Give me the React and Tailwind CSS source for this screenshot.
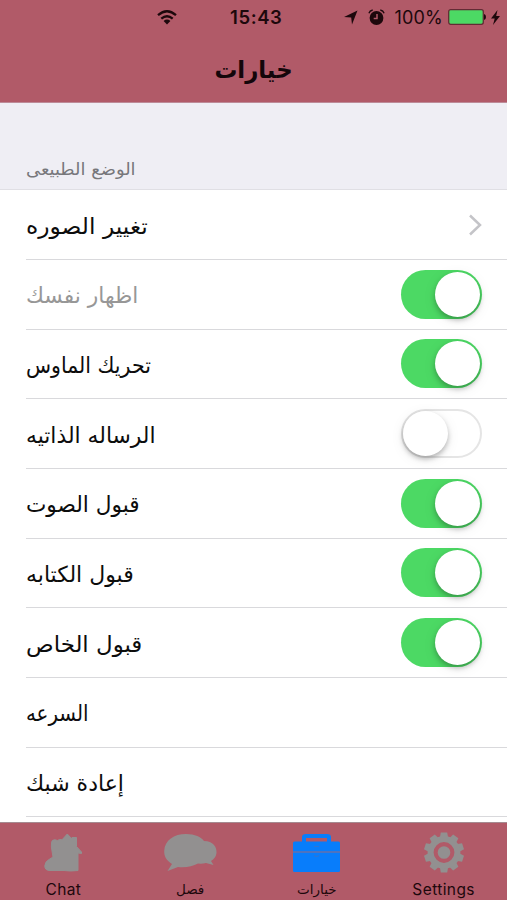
const rows = [
  { label: "تغيير الصوره", kind: "link", fit: "scale-x-[1.062]" },
  { label: "اظهار نفسك", kind: "on", muted: true, fit: "scale-x-[0.99]" },
  { label: "تحريك الماوس", kind: "on", fit: "scale-x-[0.933]" },
  { label: "الرساله الذاتيه", kind: "off", fit: "scale-x-[0.992]" },
  { label: "قبول الصوت", kind: "on", fit: "scale-x-[0.983]" },
  { label: "قبول الكتابه", kind: "on", fit: "scale-x-100" },
  { label: "قبول الخاص", kind: "on", fit: "scale-x-[1.04]" },
  { label: "السرعه", fit: "scale-x-[0.9]" },
  { label: "إعادة شبك", fit: "scale-x-100" },
];

function Toggle({ on }) {
  return (
    <div
      className={`flex h-[49px] w-[81px] items-center rounded-full ${
        on ? "justify-end bg-[#4cd964] px-[2px]" : "justify-start border-2 border-[#e5e5e5] bg-white"
      }`}
    >
      <div className="size-[45px] rounded-full bg-white shadow-[0_3px_5px_rgba(0,0,0,0.25),0_3px_14px_rgba(0,0,0,0.08)]" />
    </div>
  );
}

function Row({ label, kind, muted, fit }) {
  return (
    <div className="ml-[26px] flex h-[69.65px] shrink-0 items-center justify-between border-b border-[#d9d9dc] pr-[25px]">
      <span
        dir="rtl"
        className={`mt-[4px] origin-left whitespace-nowrap text-[22px] leading-[30px] ${fit} ${muted ? "text-[#979797]" : "text-[#0c0c0c]"}`}
      >
        {label}
      </span>
      {kind === "link" && (
        <svg width="14" height="22" viewBox="0 0 14 22" fill="none" stroke="#c4c4c8" strokeWidth="2.5">
          <path d="M2 1.5 12 11 2 20.5" />
        </svg>
      )}
      {kind === "on" && <Toggle on />}
      {kind === "off" && <Toggle />}
    </div>
  );
}

function StatusBar() {
  return (
    <div className="grid h-[34px] grid-cols-[230px_auto_1fr] items-center text-[#1d080c]">
      <svg className="ml-[157px]" width="20" height="15" viewBox="0 0 20 15" fill="none" stroke="currentColor" strokeWidth="2.3">
        <path d="M1 5.2Q10-2.6 19 5.2M4.3 8.7Q10 3.8 15.7 8.7" />
        <path d="M6.6 10.9Q10 8.2 13.4 10.9L10 14.6Z" fill="currentColor" stroke="none" />
      </svg>
      <span className="pt-px font-[Inter,sans-serif] text-[18.5px] font-semibold tracking-[0.6px]">15:43</span>
      <div className="flex items-center justify-end pr-[7px]">
        <svg width="14" height="15" viewBox="0 0 14 15" fill="currentColor">
          <path d="M13.5 .5 8 14.5 7.2 7.5 0 7Z" />
        </svg>
        <svg className="ml-[10px]" width="17" height="17" viewBox="0 0 17 17">
          <circle cx="8.5" cy="9" r="6.9" fill="currentColor" />
          <path d="M.9 4.3Q1.7 1.6 4.7 1M16.1 4.3Q15.3 1.6 12.3 1" fill="none" stroke="currentColor" strokeWidth="1.3" />
          <path d="M9 5v4.5H5.7" fill="none" stroke="#b15a68" strokeWidth="1.5" />
        </svg>
        <span className="ml-[9px] font-[Inter,sans-serif] text-[18px] tracking-[0.2px]">100%</span>
        <svg className="ml-[5px]" width="38" height="16" viewBox="0 0 38 16">
          <rect x=".7" y=".7" width="34.6" height="14.6" rx="2" fill="#4cd964" stroke="#632b35" strokeWidth="1.3" />
          <path d="M36 5q2 .5 2 3t-2 3Z" fill="currentColor" />
        </svg>
        <svg className="ml-[5px]" width="9" height="15" viewBox="0 0 9 15" fill="currentColor">
          <path d="M6.5 0 0 8.5H3.7L2 15 9 6H5.2Z" />
        </svg>
      </div>
    </div>
  );
}

function HouseIcon() {
  return (
    <svg width="38" height="39" viewBox="0 0 38 39" fill="#929090" stroke="#929090" strokeWidth="1" strokeLinejoin="round">
      <path d="M7.500 10Q7.500 6.500 11 6.800L13.500 7.500 15.500 6.500 18 6.800 23.300 1 28 6V4.500H32.500V13.500L37.500 19V20.500L34 20V37.500Q26 38.500 20 37.500L6 37.500Q.8 37.500.8 33 1 28.500 5 26.500L9 24 8 18Q7 14 7.500 10Z" />
    </svg>
  );
}

function BubblesIcon() {
  return (
    <svg width="53" height="38" viewBox="0 0 53 38" fill="#929090">
      <path d="M22 0C31 0 37 3 40 7 49 7 53 13 52.500 19 52 23 50 25 47 27L49.500 31 42 29Q38 30 34 29.500 26 34 14 33L3.500 37 8 30C2 26 0 22 .2 17 .8 6 10 0 22 0Z" />
    </svg>
  );
}

function BriefcaseIcon() {
  return (
    <svg width="47" height="38" viewBox="0 0 47 38">
      <path d="M11 8V3Q11 2 13 2H34Q36 2 36 3V8" fill="none" stroke="#087dfb" strokeWidth="4" />
      <rect y="7.500" width="47" height="30.500" rx="1.500" fill="#087dfb" />
      <path d="M0 18H47" stroke="#6670aa" strokeWidth="1.500" />
      <path d="M21 12.500h5M21 21.500q2.500 2 5 0" fill="none" stroke="#2f75d4" strokeWidth="1.200" />
    </svg>
  );
}

function GearIcon() {
  const teeth = [0, 36, 72, 108, 144, 180, 216, 252, 288, 324];
  return (
    <svg width="40" height="41" viewBox="-20 -20.500 40 41">
      {teeth.map((a) => (
        <path key={a} d="M-4.200-14-3.200-20H3.200L4.200-14Z" fill="#929090" transform={`rotate(${a})`} />
      ))}
      <circle r="13.400" fill="none" stroke="#929090" strokeWidth="6" />
      <circle r="6.300" fill="#929090" />
    </svg>
  );
}

const tabs = [
  { label: "Chat", icon: <HouseIcon />, latin: true },
  { label: "فصل", icon: <BubblesIcon /> },
  { label: "خيارات", icon: <BriefcaseIcon /> },
  { label: "Settings", icon: <GearIcon />, latin: true },
];

export default function App() {
  return (
    <div className="flex h-[900px] w-[507px] flex-col overflow-hidden bg-white font-['DejaVu_Sans',sans-serif]">
      <header className="h-[103px] shrink-0 border-b border-[#bd8b98] bg-[#b15a68]">
        <StatusBar />
        <h1 dir="rtl" className="mt-[18px] scale-x-[0.95] text-center text-[24px] leading-[36px] font-bold text-[#14060a]">
          خيارات
        </h1>
      </header>
      <main className="flex min-h-0 flex-1 flex-col overflow-hidden">
        <div className="flex h-[87.4px] shrink-0 items-end border-b border-[#e0dfe4] bg-[#efeef4] pb-[8px] pl-[26px]">
          <span dir="rtl" className="origin-left scale-x-[1.053] text-[17px] leading-[24px] text-[#77777b]">
            الوضع الطبيعى
          </span>
        </div>
        {rows.map((r) => (
          <Row key={r.label} {...r} />
        ))}
      </main>
      <nav className="grid h-[78px] shrink-0 grid-cols-4 border-t border-[#a58b91] bg-[#b15a68]">
        {tabs.map((t) => (
          <div key={t.label} className="flex flex-col items-center pt-[9px]">
            <div className="flex h-[41px] items-center">{t.icon}</div>
            <span
              className={`mt-[6px] leading-[20px] text-[#1d080c] ${
                t.latin ? "pt-px font-[Inter,sans-serif] text-[15.500px] tracking-[0.4px]" : "text-[13.500px]"
              }`}
            >
              {t.label}
            </span>
          </div>
        ))}
      </nav>
    </div>
  );
}
